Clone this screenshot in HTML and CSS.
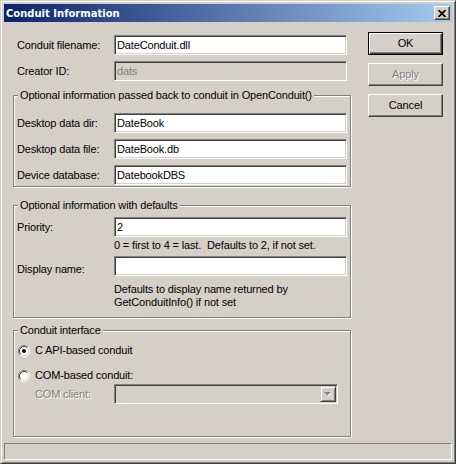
FILE: index.html
```html
<!DOCTYPE html>
<html>
<head>
<meta charset="utf-8">
<title>Conduit Information</title>
<link rel="stylesheet" href="styles.css">
</head>
<body>
<div class="window">
  <div class="titlebar">
    <span class="title">Conduit Information</span>
    <span class="close"><svg width="8" height="7" viewBox="0 0 8 7"><path d="M0.5 0 L7.5 7 M7.5 0 L0.5 7" stroke="#000" stroke-width="1.7" fill="none"/></svg></span>
  </div>
  <div class="client">
    <div class="main">
      <div class="left">
        <div class="row top"><span class="lbl">Conduit filename:</span><div class="field">DateConduit.dll</div></div>
        <div class="row top r2"><span class="lbl">Creator ID:</span><div class="field disabled">dats</div></div>

        <div class="group g1">
          <div class="gcap">Optional information passed back to conduit in OpenConduit()</div>
          <div class="row"><span class="lbl">Desktop data dir:</span><div class="field">DateBook</div></div>
          <div class="row"><span class="lbl">Desktop data file:</span><div class="field">DateBook.db</div></div>
          <div class="row"><span class="lbl">Device database:</span><div class="field">DatebookDBS</div></div>
        </div>

        <div class="group g2">
          <div class="gcap">Optional information with defaults</div>
          <div class="row prio"><span class="lbl">Priority:</span><div class="field">2</div></div>
          <div class="hint">0 = first to 4 = last.&nbsp; Defaults to 2, if not set.</div>
          <div class="row disp"><span class="lbl low">Display name:</span><div class="field"></div></div>
          <div class="help">Defaults to display name returned by<br>GetConduitInfo() if not set</div>
        </div>

        <div class="group g3">
          <div class="gcap">Conduit interface</div>
          <div class="radio r-first">
            <svg class="rb" width="12" height="12" viewBox="0 0 12 12">
              <circle cx="6" cy="6" r="5" fill="#fff"/>
              <path d="M2.11 9.89 A5.5 5.5 0 0 1 9.89 2.11" stroke="#808080" fill="none"/>
              <path d="M9.89 2.11 A5.5 5.5 0 0 1 2.11 9.89" stroke="#fff" fill="none"/>
              <path d="M2.82 9.18 A4.5 4.5 0 0 1 9.18 2.82" stroke="#404040" fill="none"/>
              <path d="M9.18 2.82 A4.5 4.5 0 0 1 2.82 9.18" stroke="#d4d0c8" fill="none"/>
              <circle cx="6" cy="6" r="2" fill="#000"/>
            </svg>
            <span class="rtext">C API-based conduit</span>
          </div>
          <div class="radio r-second">
            <svg class="rb" width="12" height="12" viewBox="0 0 12 12">
              <circle cx="6" cy="6" r="5" fill="#fff"/>
              <path d="M2.11 9.89 A5.5 5.5 0 0 1 9.89 2.11" stroke="#808080" fill="none"/>
              <path d="M9.89 2.11 A5.5 5.5 0 0 1 2.11 9.89" stroke="#fff" fill="none"/>
              <path d="M2.82 9.18 A4.5 4.5 0 0 1 9.18 2.82" stroke="#404040" fill="none"/>
              <path d="M9.18 2.82 A4.5 4.5 0 0 1 2.82 9.18" stroke="#d4d0c8" fill="none"/>
            </svg>
            <span class="rtext">COM-based conduit:</span>
          </div>
          <div class="row comrow">
            <span class="lbl dis-lbl">COM client:</span>
            <div class="combo">
              <span class="ddbtn"><svg width="14" height="14" viewBox="0 0 14 14"><path d="M4 6 H11 L7.5 9.5 Z" fill="#fff"/><path d="M3 5 H10 L6.5 8.5 Z" fill="#808080"/></svg></span>
            </div>
          </div>
        </div>
      </div>

      <div class="buttons">
        <div class="btn default">OK</div>
        <div class="btn disabled-btn">Apply</div>
        <div class="btn">Cancel</div>
      </div>
    </div>
    <div class="status"></div>
  </div>
</div>
</body>
</html>
```

FILE: styles.css
```css
* { box-sizing: border-box; }
html, body { margin: 0; padding: 0; }
body {
  width: 456px;
  height: 464px;
  overflow: hidden;
  background: #d4d0c8;
  font-family: "Liberation Sans", Arial, sans-serif;
  font-size: 11px;
  letter-spacing: -0.15px;
  color: #000;
}
.window {
  width: 456px;
  height: 464px;
  display: flex;
  flex-direction: column;
  background: #d4d0c8;
  border: 1px solid;
  border-color: #d4d0c8 #404040 #404040 #d4d0c8;
  box-shadow: inset 1px 1px #fff, inset -1px -1px #808080;
  padding: 3px;
}
.titlebar {
  height: 18px;
  flex: none;
  display: flex;
  align-items: center;
  padding-left: 2px;
  background: linear-gradient(to right, #0a246a, #a6caf0);
}
.title {
  flex: 1;
  font-family: "DejaVu Sans", Tahoma, sans-serif;
  font-weight: bold;
  font-size: 10px;
  letter-spacing: 0;
  color: #fff;
  white-space: nowrap;
}
.close {
  width: 16px;
  height: 14px;
  margin-right: 2px;
  display: flex;
  align-items: center;
  justify-content: center;
  background: #d4d0c8;
  border: 1px solid;
  border-color: #fff #404040 #404040 #fff;
  box-shadow: inset -1px -1px #808080;
}
.client {
  flex: 1;
  display: flex;
  flex-direction: column;
  margin-top: 1px;
}
.main {
  flex: 1;
  display: flex;
}
.left {
  width: 347px;
  flex: none;
  padding-left: 9px;
  padding-top: 12px;
  display: flex;
  flex-direction: column;
}
.row {
  display: flex;
  align-items: center;
  height: 20px;
  flex: none;
}
.top { padding-left: 4px; }
.r2 { margin-top: 6px; }
.lbl {
  width: 97px;
  flex: none;
  line-height: 13px;
  white-space: nowrap;
}
.lbl.low { position: relative; top: 3px; }
.field {
  width: 233px;
  height: 20px;
  flex: none;
  background: #fff;
  border: 1px solid;
  border-color: #808080 #fff #fff #808080;
  box-shadow: inset 1px 1px #404040, inset -1px -1px #d4d0c8;
  padding: 0 3px 0 2px;
  line-height: 18px;
  white-space: nowrap;
  overflow: hidden;
}
.field.disabled {
  background: #d4d0c8;
  color: #808080;
}
.group {
  width: 338px;
  flex: none;
  border: 1px solid #808080;
  box-shadow: inset 1px 1px #fff, 1px 1px #fff;
  padding: 0 0 0 3px;
  display: flex;
  flex-direction: column;
}
.gcap {
  margin: -7px 0 0 1px;
  padding: 0 2px;
  height: 13px;
  line-height: 13px;
  width: fit-content;
  background: #d4d0c8;
  white-space: nowrap;
}
.g1 { margin-top: 14px; padding-bottom: 1px; }
.g1 .row { margin-top: 6px; }
.g1 .gcap + .row { margin-top: 11px; }
.g2 { margin-top: 18px; padding-bottom: 8px; }
.prio { margin-top: 5px; }
.hint {
  margin-top: 2px;
  margin-left: 97px;
  line-height: 13px;
  white-space: nowrap;
}
.disp { margin-top: 4px; }
.help {
  margin-top: 7px;
  margin-left: 97px;
  line-height: 13px;
  white-space: nowrap;
}
.g3 { margin-top: 12px; padding-bottom: 32px; }
.radio {
  display: flex;
  align-items: center;
  height: 13px;
  padding-left: 1px;
}
.r-first { margin-top: 7px; }
.r-second { margin-top: 12px; }
.rb { flex: none; display: block; }
.rtext { margin-left: 5px; line-height: 13px; white-space: nowrap; }
.comrow { margin-top: 2px; padding-left: 18px; }
.comrow .lbl { width: 79px; }
.dis-lbl { color: #808080; text-shadow: 1px 1px 0 #fff; }
.combo {
  width: 224px;
  height: 20px;
  flex: none;
  background: #d4d0c8;
  border: 1px solid;
  border-color: #808080 #fff #fff #808080;
  box-shadow: inset 1px 1px #404040, inset -1px -1px #d4d0c8;
  padding: 1px;
  display: flex;
  justify-content: flex-end;
}
.ddbtn {
  width: 16px;
  height: 16px;
  display: flex;
  align-items: center;
  justify-content: center;
  border: 1px solid;
  border-color: #d4d0c8 #404040 #404040 #d4d0c8;
  box-shadow: inset 1px 1px #fff, inset -1px -1px #808080;
}
.buttons {
  margin-left: 17px;
  padding-top: 9px;
  display: flex;
  flex-direction: column;
  gap: 8px;
}
.btn {
  width: 75px;
  height: 23px;
  display: flex;
  align-items: center;
  justify-content: center;
  border: 1px solid;
  border-color: #fff #404040 #404040 #fff;
  box-shadow: inset -1px -1px #808080;
  line-height: 13px;
}
.btn.default {
  border: 1px solid #000;
  box-shadow: inset 1px 1px #fff, inset -1px -1px #404040, inset -2px -2px #808080;
}
.disabled-btn {
  color: #808080;
  text-shadow: 1px 1px 0 #fff;
}
.status {
  height: 17px;
  flex: none;
  border: 1px solid;
  border-color: #808080 #fff #fff #808080;
}
```
